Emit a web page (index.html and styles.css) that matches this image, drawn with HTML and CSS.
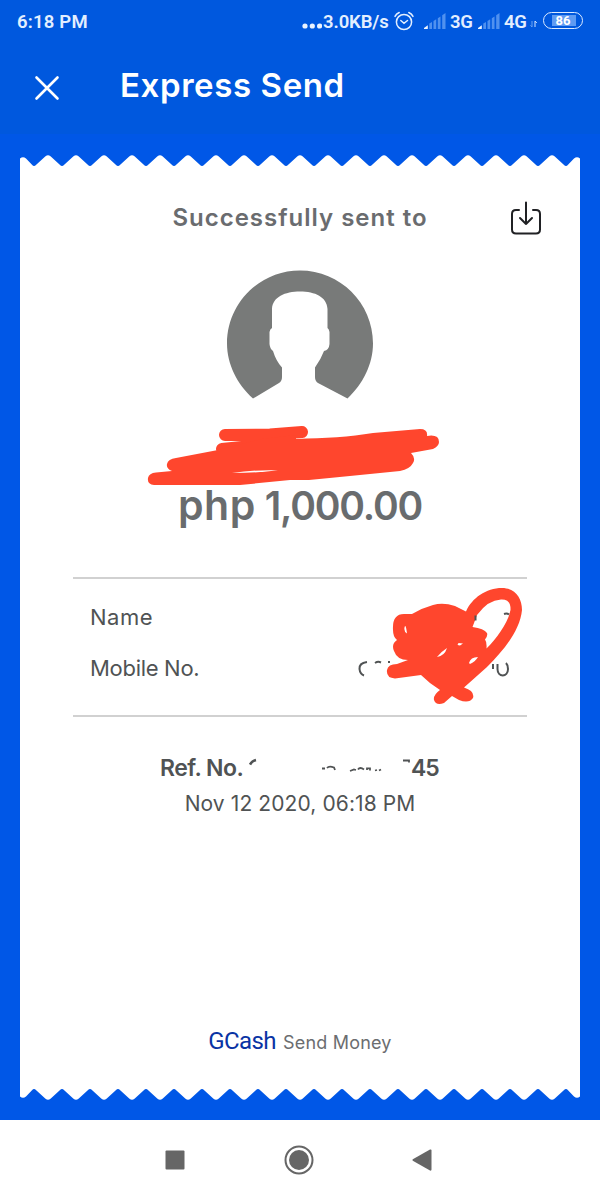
FILE: index.html
```
<!DOCTYPE html>
<html lang="en">
<head>
<meta charset="utf-8">
<title>Express Send</title>
<link rel="stylesheet" href="styles.css">
</head>
<body>
<div class="screen">
  <header class="header">
    <div class="status">
      <span class="time">6:18 PM</span>
      <div class="indicators">
        <svg class="dots" width="20" height="8" viewBox="0 0 20 8"><circle cx="3" cy="4" r="2.6"/><circle cx="10.3" cy="4" r="2.6"/><circle cx="17.6" cy="4" r="2.6"/></svg>
        <span class="speed">3.0KB/s</span>
        <svg class="alarm" width="20" height="20" viewBox="0 0 20 20"><circle cx="10" cy="11" r="7.6"/><path d="M6.8 9.5 10 12.3l3.5-2.8M1 5.4Q2.2 2.8 5.2 1.5M19 5.4Q17.800 2.800 14.800 1.500"/></svg>
        <svg class="signal" width="24" height="18" viewBox="0 0 24 18"><path class="on" d="M1 17V16L4.800 13.200V17Z"/><path class="off" d="M6.300 17V11.500L9 10V17ZM10.500 17V9L13.200 7.200V17ZM14.800 17V6.200L17.500 4.500V17ZM19.200 17V3.200L22.500 1V17Z"/></svg>
        <span class="net net-a">3G</span>
        <svg class="signal" width="24" height="18" viewBox="0 0 24 18"><path class="on" d="M1 17V16L4.800 13.200V17Z"/><path class="off" d="M6.300 17V11.500L9 10V17ZM10.500 17V9L13.200 7.200V17ZM14.800 17V6.200L17.500 4.500V17ZM19.200 17V3.200L22.500 1V17Z"/></svg>
        <span class="net net-b">4G</span>
        <svg class="data" width="8" height="8" viewBox="0 0 8 8"><path class="dim" d="M2 1V7L.5 5.300"/><path d="M5 7V1L6.800 3"/></svg>
        <span class="battery"><span class="level">86</span></span>
      </div>
    </div>
    <div class="titlebar">
      <svg class="close" width="26" height="26" viewBox="0 0 26 26"><path d="M2.500 2.500 23.500 23.500M23.500 2.500 2.500 23.500"/></svg>
      <h1 class="title">Express Send</h1>
    </div>
  </header>

  <main class="body">
    <svg class="edge" width="560" height="12" viewBox="0 0 560 12">
      <defs><pattern id="teeth" x="14" width="28" height="12" patternUnits="userSpaceOnUse"><path d="M0 12V11Q1 11 2.200 9.800L11.500 1.200Q14 -.8 16.500 1.200L25.800 9.800Q27 11 28 11V12Z"/></pattern></defs>
      <rect x="14" width="532" height="12" fill="url(#teeth)"/>
      <path d="M0 12V3.500Q3 .8 6 3.500L12 9.800Q13 11 14 11V12ZM560 12V3.500Q557 .8 554 3.500L548 9.800Q547 11 546 11V12Z"/>
    </svg>
    <section class="receipt">
      <div class="sent">
        <h2 class="sent-label">Successfully sent to</h2>
        <svg class="download" width="32" height="34" viewBox="0 0 32 34"><path d="M9 9H6Q2 9 2 13V28.500Q2 32.500 6 32.500H26Q30 32.500 30 28.500V13Q30 9 26 9H23M16 1.500V23M10 17 16 23 22 17"/></svg>
      </div>
      <svg class="avatar" width="146" height="130" viewBox="0 0 146 130"><path d="M26 128.500C10 114 0 94 0 73.500C0 33 33 .5 73 .5S146 33 146 73.500C146 94 136 114 120.500 128.500L91 113Q88 111 88 107V97.500Q94 89 97 81Q102 80 102.500 74V62Q102 59 100.500 58V39C100 27 88 21.500 73 21.500S45.500 27 45 39V58Q43 59 42.500 62V74Q43 79 46 81Q49 91 55 97.500V107Q55 111 52 113Z"/></svg>
      <p class="amount"><span class="currency">php</span><span class="value">1,000.00</span></p>
      <dl class="details">
        <div class="row"><dt class="name-label">Name</dt></div>
        <div class="row"><dt class="mobile-label">Mobile No.</dt></div>
      </dl>
      <p class="reference"><span class="ref-label">Ref. No.</span>
        <svg class="ref-hidden" width="162" height="24" viewBox="0 0 162 24"><path class="thick" d="M1 8.500Q3 5 7 4"/><path d="M73 12.500H76M78 12Q80 9.500 85 11.500L86 14M101 15 105 13.500 107 14M109 13.500Q111 10.500 115 13.500M118 14V12.300H121V14.500M126 14.500 128 14M130 14.500 132 13.500M154 4.500H160V6.500"/></svg>
        <span class="ref-end">45</span></p>
      <p class="date">Nov 12 2020, 06:18 PM</p>
      <footer class="brand"><span class="brand-name">GCash</span><span class="brand-product">Send Money</span></footer>

      <svg class="marker" width="560" height="560" viewBox="20 167 560 560">
        <path class="glyph" d="M367 662Q359 663 359.500 669Q360 674 364 675.500M375 663Q378 661 381 662.500M388 662H390M493 664V669M497.500 664V669C497.500 677.500 508 677.500 508 669Q508 665 506 663"/>
        <path class="ink" d="M225 435 270 434.500 302 432M222 449 270 444 290 441"/>
        <path class="ink-fill" d="M262 439 296 435V439C325 438 350 437 373 433L420 429Q428 429 427 436Q439 434 439 442Q439 446 433 449L411 453Q416 458 413 463Q410 469 400 471C370 474 340 477 309 480H290L240 485H154Q147 484 148 478Q149 473 156 472.500L172 471Q166 469 167 464Q168 459 176 458L218 450Z"/>
        <path class="gap" d="M232 473Q255 469.500 278 470.300Q260 472.800 232 473Z"/>
        <path class="ink-fill" d="M393 630Q392 614 404 614H412Q422 608 433 605Q443 602 455 606L466 611.500C472 598 486 588 502 588C515 588 522 598 522 610C520 631 503 651 487 667L464 687.500Q475 691 473 698Q469 704 459 700L452 696L444 703Q436 706 434 700Q433 695 440 690Q430 684 421 675L395 678.500Q386 678 387 670Q388 664 397 664L408 660Q397 660 394 651Q391 644 397 640Q393 637 393 630Z"/>
        <path class="gap" d="M472.500 627 477 615Q488 600 501 599.500Q511 599 510.500 610C508 623 497 638 486.500 648.500Q487 642 485 639.500Q488 636 487 633Q484 628.500 472.500 627ZM405 626Q406 625 407 633.500Q403 631 405 626ZM437 657Q442 651 447 648Q444.500 656 437 657ZM457.500 645 458.500 643 463 643.500 460 645.500ZM469 663Q470.500 657 478 657Q475 662 470 664Z"/>
        <path class="glyph" d="M475.500 615.500V620.500M504 614Q507 613 509 614.500"/>
      </svg>
    </section>
    <svg class="edge edge-bottom" width="560" height="12" viewBox="0 0 560 12">
      <rect x="14" width="532" height="12" fill="url(#teeth)"/>
      <path d="M0 12V3.500Q3 .8 6 3.500L12 9.800Q13 11 14 11V12ZM560 12V3.500Q557 .8 554 3.500L548 9.800Q547 11 546 11V12Z"/>
    </svg>
  </main>

  <nav class="navbar">
    <svg width="20" height="20" viewBox="0 0 20 20"><rect x=".5" y=".5" width="19" height="19" rx="1"/></svg>
    <svg width="30" height="30" viewBox="0 0 30 30"><circle class="ring" cx="15" cy="15" r="13.500"/><circle cx="15" cy="15" r="10"/></svg>
    <svg width="20" height="22" viewBox="0 0 20 22"><path d="M.8 10.200 18 .5Q19.500 0 19.500 1.500V20.500Q19.500 22 18 21.500L.8 11.800Q0 11 .8 10.200Z"/></svg>
  </nav>
</div>
</body>
</html>
```
FILE: styles.css
```
* { box-sizing: border-box; }
body { margin: 0; font-family: Inter, "Open Sans", sans-serif; }
h1, h2, p, dl { margin: 0; }
svg { display: block; flex: none; }
.screen { width: 600px; height: 1200px; display: flex; flex-direction: column; background: #0057e7; }

.header { height: 134px; background: #0058de; color: #fff; }
.status { height: 42px; padding: 1px 17px 0; display: flex; justify-content: space-between; align-items: center; font: 600 18.500px/42px Roboto, sans-serif; color: #e3efff; }
.time { letter-spacing: .2px; }
.indicators { display: flex; align-items: center; }
.dots { fill: #eaf3ff; margin: 8px 1px 0 0; }
.speed { width: 71px; letter-spacing: -.1px; }
.alarm { fill: none; stroke: #e3efff; stroke-width: 1.500; stroke-linecap: round; margin-top: -2px; }
.signal { margin: -1px 0 0 9px; }
.signal .on { fill: #eef5ff; }
.signal .off { fill: #5091ef; }
.net { margin-left: 3px; letter-spacing: -.2px; width: 24px; }
.net-a + .signal { margin-left: 3px; }
.data { margin: 5px 5px 0 2px; fill: none; stroke: #cfe2ff; }
.data .dim { stroke: #6ba3f2; }
.battery { width: 40px; height: 17px; margin-top: -2px; border: 1.500px solid #dceaff; border-radius: 9px; padding: 2px 4px; }
.level { display: block; height: 11px; border-radius: 2px; background: linear-gradient(90deg, transparent 12%, #5f9bf2 12%, #5f9bf2 94%, transparent 94%); font: 700 13px/11px Roboto, sans-serif; text-align: center; color: #fff; }
.titlebar { height: 92px; display: flex; align-items: flex-start; padding: 33px 0 0 34px; }
.close { fill: none; stroke: #fff; stroke-width: 2.600; stroke-linecap: round; }
.title { margin: -11px 0 0 60px; font-size: 33px; line-height: 42px; font-weight: 600; letter-spacing: .6px; }

.body { height: 986px; padding: 21px 20px; }
.edge { fill: #fff; }
.edge-bottom { transform: scaleY(-1); }
.receipt { position: relative; height: 921px; background: #fff; text-align: center; color: #505354; }
.sent { height: 103px; padding: 34px 38px 0 70px; display: flex; justify-content: space-between; }
.sent-label { flex: 1; font-size: 24px; line-height: 34px; font-weight: 600; letter-spacing: 1px; color: #6a6c6f; }
.download { fill: none; stroke: #202124; stroke-width: 2; stroke-linecap: round; stroke-linejoin: round; }
.avatar { margin: 0 auto; fill: #787a79; }
.amount { height: 99px; margin-top: 78px; display: flex; justify-content: center; align-items: baseline; gap: 9px; font-size: 39px; line-height: 54px; font-weight: 600; color: #696c6e; }
.currency { font-size: 41px; letter-spacing: .5px; }
.value { letter-spacing: -1.200px; }
.details { margin: 0 53px; height: 140px; border: solid #d1d1d1; border-width: 2px 0; padding: 12px 17px; }
.row { height: 52px; display: flex; }
.row dt { font-size: 22px; line-height: 52px; }
.row .mobile-label { line-height: 50px; }
.name-label { letter-spacing: .5px; }
.mobile-label { letter-spacing: -.3px; }
.reference { margin-top: 34px; height: 34px; display: flex; justify-content: center; font-size: 23px; line-height: 34px; font-weight: 600; }
.ref-label { width: 89px; text-align: left; white-space: nowrap; letter-spacing: -.5px; }
.ref-hidden { fill: none; stroke: #505354; stroke-width: 1.800; margin-top: 5px; }
.ref-hidden .thick { stroke-width: 2.600; }
.ref-end { width: 29px; letter-spacing: -1px; text-align: left; }
.date { height: 38px; font-size: 21px; line-height: 38px; letter-spacing: .1px; }
.brand { height: 40px; margin-top: 198px; display: flex; justify-content: center; align-items: baseline; gap: 7px; line-height: 40px; }
.brand-name { font-family: Roboto, sans-serif; font-size: 24px; letter-spacing: -.6px; color: #0933a4; }
.brand-product { font-size: 18px; color: #6b6d70; letter-spacing: .2px; }
.marker { position: absolute; left: 0; top: 0; }
.ink { fill: none; stroke: #ff462d; stroke-width: 12; stroke-linecap: round; }
.ink-fill { fill: #ff462d; }
.gap { fill: #fff; }
.glyph { fill: none; stroke: #505354; stroke-width: 2; }

.navbar { height: 80px; padding-right: 3px; background: #fff; display: flex; justify-content: center; align-items: center; gap: 98.500px; fill: #666; }
.ring { fill: none; stroke: #666; stroke-width: 2; }
```
